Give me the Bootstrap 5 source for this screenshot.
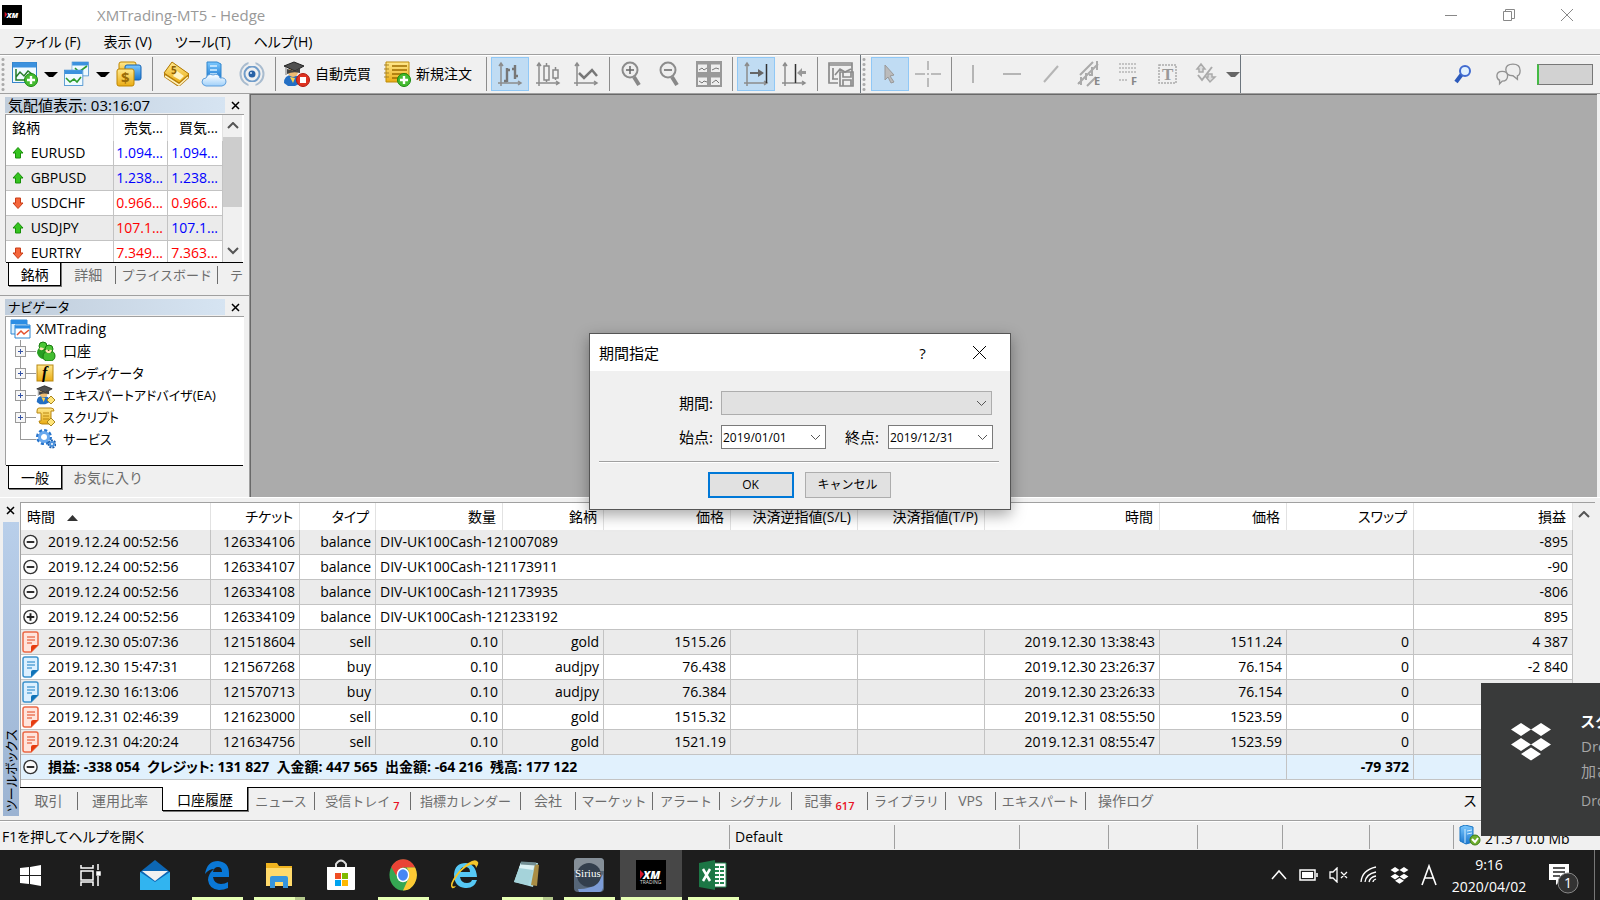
<!DOCTYPE html>
<html lang="ja">
<head>
<meta charset="utf-8">
<meta name="viewport" content="width=device-width, initial-scale=1">
<title>XMTrading-MT5 - Hedge</title>
<link href="https://cdn.jsdelivr.net/npm/bootstrap@5.3.0/dist/css/bootstrap.min.css" rel="stylesheet">
<style>
:root{--face:#f0f0f0;--edge:#a0a0a0;--grid:#c3c3c3}
body{font-family:"Open Sans","Noto Sans CJK JP",sans-serif;font-size:14px;line-height:20px;color:#000;font-feature-settings:"palt";background:var(--face);white-space:nowrap}
button{color:inherit;background:none;border:0;padding:0}
svg{display:block;flex:none}
.titlebar{height:29px;background:#fff;color:#999;font-size:15px}
.caption-btn{width:58px;height:29px}
.app-icon{width:20px;height:20px;margin:0 75px 0 2px}
.menubar{height:25px;gap:23px;padding-left:13px}
.menubar a{color:#000;text-decoration:none}
.toolstrip{height:40px;border-top:1px solid var(--edge);border-bottom:1px solid var(--edge);box-shadow:inset 0 1px #fff}
.grip{width:6px;height:34px;background:radial-gradient(circle,#aaa 1px,transparent 2px) 0 0/6px 5px}
.tool{width:38px;height:34px;display:flex;align-items:center;justify-content:center}
.wide{margin-left:-3px}
.wide .tool{width:39px}
.tool.on{background:#c0dcf3;border:1px solid #90c8f6}
.drop{width:14px;height:34px}
.drop::after{content:"";display:block;border:5px solid transparent;border-top-color:#000;border-bottom:0}
.drop.dim::after{border-top-color:#666}
.rule{width:1px;height:34px;margin:0 4px;background:#8c8c8c}
.text-tool{height:34px;gap:5px;padding:0 3px;width:101px}
.meter{width:56px;height:21px;background:#d2d2d2;border:1px solid #777;border-left:2px solid #4b4;margin-right:7px}
.work{flex:1;min-height:0}
.side{width:251px;border-right:1px solid #696969;box-shadow:inset -1px 0 var(--edge)}
.canvas-area{background:#ababab;border-top:1px solid #696969;margin-right:3px}
.pane-title{height:16px;margin:3px 0 0 5px;padding-right:7px;line-height:16px}
.pane-title span{background:linear-gradient(90deg,#c0cddb,#d6e4f2);width:220px;padding-left:3px;flex:none;font-size:15px}
.kana,.pane-title .kana{font-size:13px}
.close-x{width:16px;height:16px;display:flex;align-items:center;justify-content:center}
.sunken{margin:1px 6px 0 5px;border-left:1px solid var(--edge);border-top:1px solid var(--edge);background:#fff}
.quotes{height:148px;overflow:hidden}
.quotes table{width:217px;table-layout:fixed;border-collapse:separate;border-spacing:0}
.quotes td,.quotes th{height:25px;padding:0 4px;border-right:1px solid var(--grid);border-bottom:1px solid var(--grid);font-weight:400;overflow:hidden}
.quotes th{height:26px;border-bottom:0;border-color:#e2e2e2;padding:0 6px}
.quotes .num{text-align:right;padding:0 4px 0 0}
.quotes tbody tr:nth-child(even){background:#ebebeb}
.up{color:#00f}.down{color:#f00}
.sym{width:17px;display:inline-block;padding-left:2px}
.sym svg{display:inline-block;vertical-align:-1px}
.scroller{width:19px;flex:none;background:var(--face);margin-right:2px}
.thumb{height:70px;background:#cdcdcd}
.scroller .arr{height:22px;display:flex;align-items:center;justify-content:center}
.tabset{border-top:1px solid #000;color:#6d6d6d;background:var(--face)}
.tabset button{height:18px;line-height:18px;border-right:1px solid #6d6d6d;text-align:center}
.tabset button.on{height:24px;margin-top:-1px;background:#fff;border:1px solid #000;border-width:0 1px 1px;color:#000;padding-top:2px;box-shadow:1px 1px #777}
.tabset button.last{border:0}
.mini-tabs{margin:0 7px 0 6px;height:27px;padding-left:2px;overflow:hidden}
.mini-tabs .on{width:54px}.mini-tabs .w-a{width:56px}.mini-tabs .w-b{width:103px}.mini-tabs .w-c{width:92px}
.pane-one{height:199px;border-bottom:1px solid var(--edge)}
.tree{height:149px;list-style:none;padding:1px 0 0 4px}
.tree li{height:22px;display:flex;align-items:center}
.tree .stem{width:26px;height:22px;background:linear-gradient(#999,#999) 10px 0/1px 22px no-repeat,linear-gradient(90deg,#999,#999) 10px 11px/16px 1px no-repeat}
.tree li:last-child .stem{background-size:1px 11px,16px 1px}
.plus{width:11px;height:11px;border:1px solid #999;background:linear-gradient(#3553a5,#3553a5) 2px 4px/5px 1px no-repeat,linear-gradient(#3553a5,#3553a5) 4px 2px/1px 5px no-repeat,#f7f7f7;margin:6px 0 0 5px;display:block}
.tree svg{margin-right:7px}
.toolbox{height:323px;border-top:1px solid #fff;background:var(--face)}
.rail{width:20px}
.rail-label{width:16px;margin-left:3px;background:linear-gradient(#9bb3d2,#b9cfea);flex:1;writing-mode:vertical-rl;text-orientation:sideways;transform:rotate(180deg);font-size:13px;line-height:16px;padding-top:4px}
.book{border:1px solid var(--edge);border-width:1px 0 0 1px;margin:4px 5px 0 0;background:#fff;height:285px}
.book-rows{flex:1;min-width:0}
.history{width:100%;table-layout:fixed;border-collapse:separate;border-spacing:0}
.history th,.history td{height:25px;padding:0 4px;text-align:right;border-right:1px solid var(--grid);border-bottom:1px solid var(--grid);font-weight:400;overflow:visible}
.history th{height:27px;border-bottom:0;border-color:#e2e2e2;padding:1px 6px 0}
.history tbody tr:nth-child(odd){background:#ebebeb}
.history .start{text-align:left}
.history td:first-child{padding-left:1px}
.history td svg{margin-right:9px;width:17px}
.history tfoot td{background:#e1f1fd;font-weight:700}
.c1{width:190px}.c2{width:89px}.c3{width:76px}.c4{width:127px}.c5{width:101px}.c9{width:175px}
.ledger-scroll{width:22px;flex:none;background:var(--face)}
.main-tabs{display:grid;grid-template-columns:58px 84px 86px 67px 96px 110px 55px 77px 67px 72px 76px 78px 50px 90px 80px auto;height:26px;margin-right:5px}
.main-tabs button{margin-top:4px}
.mini-tabs button{margin-top:3px}
.main-tabs .strategy{color:#000;text-align:right;padding-right:104px}
.count{color:#e81123;font-size:11px;font-weight:600;position:relative;top:4px;margin-left:3px}
.statusbar{height:30px;border-top:1px solid var(--edge);box-shadow:inset 0 1px #fff}
.statusbar div{height:24px;border-right:1px solid var(--edge);margin-top:4px;padding:2px 0 0 5px}
.s1{width:730px}.s2{width:165px}.s3{width:125px}.s4{width:89px}.s6{width:85px}.s7{width:87px}.s8{width:84px}
.statusbar .s1{padding-left:2px}.statusbar .s9{border:0;padding-top:0}
.taskbar{height:50px;background:#1d1d1d;color:#fff}
.task{width:62px;height:50px;display:flex;align-items:center;justify-content:center}
.task.sys{width:60px}
.task.run{background:linear-gradient(#e6ffb4,#e6ffb4) center bottom/51px 3px no-repeat}
.task.multi{background:linear-gradient(90deg,#e6ffb4 41px,#b4c98c 41px) center bottom/51px 3px no-repeat}
.task.front{background:linear-gradient(#e6ffb4,#e6ffb4) center bottom/61px 3px no-repeat,#474747}
.tray{width:30px;display:flex;justify-content:center;align-items:center}
.clock{width:90px;line-height:22px;text-align:center}
.notice{width:52px;padding-left:15px;margin-right:8px}
.peek{width:6px;border-left:1px solid #777}
.period-dialog{position:absolute;top:333px;left:50%;transform:translateX(-50%);width:422px;background:var(--face);border:1px solid #555;box-shadow:0 5px 14px rgba(0,0,0,.35);z-index:5;font-size:15px}
.dialog-head{height:37px;background:#fff;padding:0 2px 0 9px}
.dialog-head button{width:57px;height:37px;display:flex;align-items:center;justify-content:center}
.dialog-body{padding:20px 17px 11px 9px}
.dialog-body label{width:122px;text-align:right;padding-right:8px}
.dialog-body label.second{width:62px;padding-right:9px}
.picker{appearance:none;height:24px;border:1px solid #7a7a7a;border-radius:0;background:#fff url("data:image/svg+xml,%3Csvg xmlns='http://www.w3.org/2000/svg' width='11' height='7'%3E%3Cpath d='M1 1l4.500 4.500L10 1' fill='none' stroke='%23555'/%3E%3C/svg%3E") right 4px center no-repeat;font-size:12px;line-height:20px;padding:1px 1px 0;color:#000;width:105px;opacity:1}
.picker.full{width:271px;background-color:#e1e1e1;border-color:#adadad}
.dates{margin-top:10px}
.dialog-line{border-top:1px solid var(--edge);box-shadow:0 1px #fff;margin:12px -6px 10px 0;height:1px}
.dialog-actions{gap:11px;padding-left:6px}
.push{width:86px;height:26px;background:#e1e1e1;border:1px solid #adadad;font-size:12px}
.push.ok{border:2px solid #0078d7}
.toast-note{position:absolute;right:0;top:683px;width:119px;height:153px;background:#393a3a;z-index:6;overflow:hidden;color:#a6a6a6;font-size:15px}
.toast-note svg{margin:40px 30px 0 30px}
.toast-copy{padding-top:26px;line-height:25px}
.toast-copy strong{color:#fff}
.toast-copy small{font-size:14px;line-height:33px}
</style>
</head>
<body class="d-flex flex-column vh-100 overflow-hidden position-relative">
<svg width="0" height="0" class="position-absolute">
 <defs>
  <linearGradient id="gold" x2="0" y2="1"><stop stop-color="#ffe98e"/><stop offset="1" stop-color="#eaac14"/></linearGradient>
  <linearGradient id="sky" x2="0" y2="1"><stop stop-color="#7cc9ff"/><stop offset="1" stop-color="#1a76cf"/></linearGradient>
  <linearGradient id="pale" x2="0" y2="1"><stop stop-color="#fff"/><stop offset="1" stop-color="#9fd0fa"/></linearGradient>
 </defs>
 <symbol id="addball" viewBox="0 0 14 14"><circle cx="7" cy="7" r="6.500" fill="#45bb31" stroke="#188a0d"/><path d="M7 3v8M3 7h8" stroke="#fff" stroke-width="2.400"/></symbol>
 <symbol id="axes" viewBox="0 0 26 26"><path d="M4 3v22M1 22h22M2 5l2-3 2 3M21 20l3 2-3 2" fill="none" stroke="#8c8c8c" stroke-width="1.500"/></symbol>
 <symbol id="up" viewBox="0 0 12 12"><path d="M6 .5l5 5.500H8.500v5h-5V6H1z" fill="#35c420" stroke="#199009"/></symbol>
 <symbol id="down" viewBox="0 0 12 12"><path d="M6 11.500L1 6h2.500V1h5v5H11z" fill="#f5663b" stroke="#c93c17"/></symbol>
 <symbol id="minus" viewBox="0 0 18 18"><circle cx="9" cy="9" r="7" fill="#fafafa" stroke="#333" stroke-width="1.500"/><path d="M5 9h8" stroke="#222" stroke-width="2"/></symbol>
 <symbol id="plus" viewBox="0 0 18 18"><circle cx="9" cy="9" r="7" fill="#fafafa" stroke="#333" stroke-width="1.500"/><path d="M5 9h8M9 5v8" stroke="#222" stroke-width="2"/></symbol>
 <symbol id="sell" viewBox="0 0 17 22"><path d="M3 1h11q2 0 2 2v11l-7 7H3q-2 0-2-2V3q0-2 2-2z" fill="#ffe4dc" stroke="#ec6845" stroke-width="1.500"/><path d="M16 14l-7 7v-5q0-2 2-2z" fill="#e63c10"/><path d="M5 6h8M5 9h8M5 12h5" stroke="#ec7a5c" stroke-width="1.300"/></symbol>
 <symbol id="buy" viewBox="0 0 17 22"><path d="M3 1h11q2 0 2 2v11l-7 7H3q-2 0-2-2V3q0-2 2-2z" fill="#dcf0ff" stroke="#3d92cd" stroke-width="1.500"/><path d="M16 14l-7 7v-5q0-2 2-2z" fill="#0f73b8"/><path d="M5 6h8M5 9h8M5 12h5" stroke="#5aa4d8" stroke-width="1.300"/></symbol>
 <symbol id="dropbox" viewBox="0 0 40 38"><path d="M10 0l10 6.500L10 13 0 6.500zM30 0l10 6.500L30 13l-10-6.500zM10 15l10 6.500L10 28 0 21.500zM30 15l10 6.500L30 28l-10-6.500zM20 24.500l10 6.500-10 6.500L10 31z" fill="#fff"/></symbol>
 <symbol id="chart" viewBox="0 0 26 26"><rect x=".5" y="1.500" width="24" height="20" fill="#effaff" stroke="#3585ca"/><path d="M1 4h23" stroke="#3b91de" stroke-width="5"/></symbol>
 <symbol id="scholar" viewBox="0 0 26 26"><path d="M1 22q0-8 8-8 9 0 9 8l-6 3H5z" fill="#246fc4"/><circle cx="10" cy="11" r="5" fill="#eebc72"/><path d="M1 5l10-4 10 4-9 5z" fill="#505050" stroke="#222"/><path d="M4 8v5q6-3 13-1V7l-5 3z" fill="#444"/><path d="M3 6v8" stroke="#777"/><path d="M7 16l3 6 2-5" fill="#ffd34d"/></symbol>
 <symbol id="xmark" viewBox="0 0 30 30"><path d="M0 0h30v30H0z" fill="#000"/><path d="M4 10l4 4-4 5z" fill="#d6152b"/><text x="7" y="19" fill="#fff" font-family="Open Sans" font-weight="800" font-style="italic" font-size="11">XM</text></symbol>
</svg>

<header class="titlebar d-flex align-items-center">
 <svg class="app-icon"><use href="#xmark"/></svg><span>XMTrading-MT5 - Hedge</span>
 <div class="ms-auto d-flex">
  <button class="caption-btn" aria-label="最小化"><svg class="m-auto" width="12" height="12" stroke="#888"><path d="M0 6.500h12"/></svg></button>
  <button class="caption-btn" aria-label="元に戻す"><svg class="m-auto" width="14" height="14" fill="none" stroke="#888"><path d="M1.500 3.500h8v9h-8zM3.500 3V1.500h9v9H10"/></svg></button>
  <button class="caption-btn" aria-label="閉じる"><svg class="m-auto" width="14" height="14" stroke="#888"><path d="M1 1l12 12M13 1L1 13"/></svg></button>
  <span class="pe-1"></span>
 </div>
</header>
<nav class="menubar d-flex align-items-center">
 <a href="#">ファイル (F)</a><a href="#">表示 (V)</a><a href="#">ツール(T)</a><a href="#">ヘルプ(H)</a>
</nav>
<div class="toolstrip d-flex align-items-center" role="toolbar">
 <span class="grip"></span>
 <button class="tool" aria-label="新規チャート"><svg width="26" height="26"><use href="#chart"/><path d="M4 8v11h10M4 16l4-5 4 4 4-5 4 3" fill="none" stroke="#247b28" stroke-width="1.500"/><use href="#addball" x="12" y="12" width="14" height="14"/></svg></button>
 <button class="drop" aria-label="チャート一覧"></button>
 <button class="tool" aria-label="プロファイル"><svg width="26" height="26"><svg x="7" y="0" width="19" height="18" viewBox="0 0 26 26"><use href="#chart"/></svg><path d="M11 7l4 4 8-6" fill="none" stroke="#2d9c2d" stroke-width="1.600"/><svg x="0" y="8" width="20" height="20" viewBox="0 0 26 26"><use href="#chart"/></svg><path d="M2 17l4 4 4-3 3 3 4-5" fill="none" stroke="#2d9c2d" stroke-width="1.600"/></svg></button>
 <button class="drop" aria-label="プロファイル一覧"></button>
 <button class="tool" aria-label="気配値表示"><svg width="26" height="26"><rect x="3" y="1" width="17" height="14" rx="2" fill="url(#gold)" stroke="#bf8600"/><rect x="9" y="4" width="16" height="15" rx="2" fill="url(#sky)" stroke="#1562b3"/><rect x="1" y="8" width="17" height="17" rx="2" fill="url(#gold)" stroke="#bf8600"/><text x="5" y="22" font-size="15" font-weight="700" fill="#9c6c06">$</text></svg></button>
 <span class="rule"></span>
 <button class="tool" aria-label="ナビゲータ"><svg width="27" height="26"><path d="M1 12L9 1l17 12v4l-9 8h-3L1 16z" fill="#b47a0c"/><path d="M1 12L9 1l17 12-10 9z" fill="url(#gold)" stroke="#b27b07"/><path d="M2 15l14 9 9-8" fill="none" stroke="#fff3bd" stroke-width="1.500"/><path d="M14 10l7 5-4 4-7-4z" fill="#fff4c4"/><text x="8" y="13" font-size="10" font-weight="700" fill="#8c5f05">5</text></svg></button>
 <button class="tool" aria-label="VPS"><svg width="26" height="26"><path d="M6 1h10l4 2v15H6z" fill="url(#sky)" stroke="#3086ce"/><path d="M9 5h7M9 9h7M9 13h7" stroke="#d8f0ff" stroke-width="1.500"/><path d="M5 25q-4-1-4-4 0-4 4-4 2-5 7-3 6-2 7 3 6-1 6 4 0 3-4 4z" fill="url(#pale)" stroke="#5f9fdc"/></svg></button>
 <button class="tool" aria-label="シグナル"><svg width="26" height="26" fill="none"><circle cx="13" cy="13" r="11.500" stroke="#a9bccf" stroke-width="2"/><circle cx="13" cy="13" r="7.500" stroke="#719dca" stroke-width="2"/><path d="M13 0v5M13 21v5" stroke="#f0f0f0" stroke-width="7"/><circle cx="13" cy="13" r="3.500" fill="#2862a7"/><circle cx="12" cy="12" r="1" fill="#d5e9ff"/></svg></button>
 <span class="rule"></span>
 <button class="text-tool d-flex align-items-center"><svg width="27" height="26"><use href="#scholar" width="26" height="26"/><circle cx="20" cy="19" r="6.500" fill="#de3220" stroke="#af1b11"/><path d="M17 16h6v6h-6z" fill="#fff"/></svg>自動売買</button>
 <button class="text-tool d-flex align-items-center"><svg width="27" height="26"><path d="M2 1h23v20H2z" fill="url(#gold)" stroke="#bd8b0b"/><path d="M8 5h15M8 9h15M8 13h15M8 17h9" stroke="#9f6e00" stroke-width="1.500"/><path d="M0 4h5M0 8h5M0 12h5M0 16h5" stroke="#a78329"/><use href="#addball" x="13" y="12" width="14" height="14"/></svg>新規注文</button>
 <span class="rule"></span>
 <button class="tool on" aria-label="バーチャート"><svg width="26" height="26"><use href="#axes"/><path d="M10 7v14M10 9h3M7 20h3M18 4v14M15 8h3M18 15h3" stroke="#777" stroke-width="2.400"/></svg></button>
 <button class="tool" aria-label="ローソク足"><svg width="26" height="26" fill="none" stroke="#888" stroke-width="1.500"><use href="#axes"/><path d="M9 5h5v14H9zM11.500 2v3M11.500 19v2M18 9h5v8h-5zM20.500 6v3M20.500 17v2"/></svg></button>
 <button class="tool" aria-label="ラインチャート"><svg width="26" height="26"><use href="#axes"/><path d="M6 12l5 5 8-8 5 6" fill="none" stroke="#777" stroke-width="2.500"/></svg></button>
 <span class="rule"></span>
 <button class="tool" aria-label="拡大"><svg width="26" height="26"><path d="M14 16l5 8" stroke="#888" stroke-width="4"/><circle cx="10" cy="9" r="7.500" fill="#eee" stroke="#8c8c8c" stroke-width="2"/><path d="M6 9h8M10 5v8" stroke="#666" stroke-width="1.500"/></svg></button>
 <button class="tool" aria-label="縮小"><svg width="26" height="26"><path d="M14 16l5 8" stroke="#888" stroke-width="4"/><circle cx="10" cy="9" r="7.500" fill="#eee" stroke="#8c8c8c" stroke-width="2"/><path d="M6 9h8" stroke="#666" stroke-width="1.500"/></svg></button>
 <button class="tool" aria-label="整列"><svg width="26" height="26" fill="#eee" stroke="#999" stroke-width="2"><path d="M1 1h11v11H1zM14 1h11v11H14zM1 14h11v11H1zM14 14h11v11H14z"/><path d="M1 2h24M1 15h24" stroke-width="3"/><path d="M3 9l3-2 2 2 3-2M16 9l4-2 3 1M3 20l3 2 2-2 3 1M16 22l4-3 3 3" fill="none" stroke="#777" stroke-width="1"/></svg></button>
 <span class="rule"></span>
 <button class="tool on" aria-label="自動スクロール"><svg width="26" height="26"><use href="#axes"/><path d="M7 11h8V8l6 4-6 4v-3H7z" fill="#666"/><path d="M23.500 3v19" stroke="#333" stroke-width="1.500"/></svg></button>
 <button class="tool" aria-label="チャートシフト"><svg width="26" height="26"><use href="#axes"/><path d="M14.500 3v19" stroke="#333" stroke-width="1.500"/><path d="M25 10h-4V7l-5 5 5 4v-3h4z" fill="#999"/></svg></button>
 <span class="rule"></span>
 <button class="tool" aria-label="テンプレート"><svg width="26" height="26" fill="none" stroke="#8b8b8b" stroke-width="1.700"><path d="M10 22H1V2h23v9M1 4h23M5 7v11M4 18h6M7 14l5-6 5 3 6-3"/><path d="M12 11h13v14H12zM15 11v5h8v-5M15 25v-6h8v6" fill="#eee"/></svg></button>
 <span class="border-end border-secondary align-self-stretch"></span><span class="grip me-1"></span>
 <button class="tool on" aria-label="カーソル"><svg width="16" height="22"><path d="M3 2l9 10-4 1 4 6-3 1-3-6-3 3z" fill="#bbb" stroke="#999"/></svg></button>
 <button class="tool" aria-label="十字"><svg width="26" height="26" stroke="#bbb" stroke-width="2"><path d="M13 0v9M13 12v2M13 17v9M0 13h10M16 13h10"/></svg></button>
 <span class="rule"></span>
 <div class="d-flex wide">
  <button class="tool" aria-label="垂直線"><svg width="26" height="26" stroke="#b5b5b5" stroke-width="2"><path d="M13 4v18"/></svg></button>
  <button class="tool" aria-label="水平線"><svg width="26" height="26" stroke="#b5b5b5" stroke-width="2"><path d="M4 13h18"/></svg></button>
  <button class="tool" aria-label="トレンドライン"><svg width="26" height="26" stroke="#b5b5b5" stroke-width="2"><path d="M6 21L20 5"/></svg></button>
  <button class="tool" aria-label="チャネル"><svg width="28" height="28" stroke="#aaa" stroke-width="2"><path d="M2 24L22 4M4 15L17 2M11 26l9-9M5 17v8M10 13v7M16 7v9M21 1v9M2 23h3M13 15h3"/><text x="18" y="25" font-size="11" font-weight="700" fill="#888" stroke="none">E</text></svg></button>
  <button class="tool" aria-label="フィボナッチ"><svg width="26" height="28" stroke="#b5b5b5" stroke-width="1.500" stroke-dasharray="2 1"><path d="M3 4h18M3 8h18M3 12h18M3 20h9"/><text x="15" y="25" font-size="11" font-weight="700" fill="#888" stroke="none">F</text></svg></button>
  <button class="tool" aria-label="テキスト"><svg width="24" height="26"><path d="M3 4h17v18H3z" fill="none" stroke="#aaa" stroke-width="1.500" stroke-dasharray="2 1"/><text x="6" y="19" font-family="Liberation Serif" font-size="17" font-weight="700" fill="#999">T</text></svg></button>
  <button class="tool" aria-label="図形"><svg width="24" height="26" fill="#ddd" stroke="#aaa" stroke-width="1.500"><path d="M2 8l4-5 4 5H8v3H4V8zM13 16v-3h4v3h3l-5 5-4-5z"/><path d="M3 14l4 5L17 6" fill="none" stroke-width="2"/></svg></button>
 </div>
 <button class="drop dim" aria-label="図形一覧"></button><span class="border-end border-secondary align-self-stretch"></span>
 <div class="ms-auto d-flex align-items-center">
  <button class="me-4" aria-label="検索"><svg width="18" height="20"><path d="M8 10l-6 8" stroke="#2c5abb" stroke-width="4"/><circle cx="11" cy="7" r="5" fill="#e1f2ff" stroke="#416bd0" stroke-width="2"/></svg></button>
  <button class="me-3" aria-label="チャット"><svg width="25" height="24" viewBox="0 0 28 26" fill="#eee" stroke="#929292" stroke-width="1.500"><path d="M19 2q8 0 8 7 0 5-3 6v4l-5-4q-8 0-8-7 0-6 8-6z"/><path d="M7 10q6 0 6 5 0 6-6 6l-3 3v-4q-3-1-3-5 0-5 6-5z"/></svg></button>
  <div class="meter"></div>
 </div>
</div>

<main class="work d-flex">
 <aside class="side flex-shrink-0">
  <section class="pane-one">
   <div class="pane-title d-flex justify-content-between"><span>気配値表示: 03:16:07</span><button class="close-x" aria-label="閉じる"><svg width="9" height="9" stroke="#000" stroke-width="1.500"><path d="M1 1l7 7M8 1L1 8"/></svg></button></div>
   <div class="sunken quotes d-flex justify-content-between">
    <table><colgroup><col style="width:108px"><col style="width:54px"><col></colgroup>
     <thead><tr><th>銘柄</th><th class="num">売気...</th><th class="num">買気...</th></tr></thead>
     <tbody>
     <tr><td><span class="sym"><svg width="12" height="12"><use href="#up"/></svg></span> EURUSD</td><td class="num up">1.094...</td><td class="num up">1.094...</td></tr>
     <tr><td><span class="sym"><svg width="12" height="12"><use href="#up"/></svg></span> GBPUSD</td><td class="num up">1.238...</td><td class="num up">1.238...</td></tr>
     <tr><td><span class="sym"><svg width="12" height="12"><use href="#down"/></svg></span> USDCHF</td><td class="num down">0.966...</td><td class="num down">0.966...</td></tr>
     <tr><td><span class="sym"><svg width="12" height="12"><use href="#up"/></svg></span> USDJPY</td><td class="num down">107.1...</td><td class="num up">107.1...</td></tr>
     <tr><td><span class="sym"><svg width="12" height="12"><use href="#down"/></svg></span> EURTRY</td><td class="num down">7.349...</td><td class="num down">7.363...</td></tr>
     </tbody></table>
    <div class="scroller d-flex flex-column"><span class="arr"><svg width="12" height="8" fill="none" stroke="#555" stroke-width="2"><path d="M1 6l5-5 5 5"/></svg></span><span class="thumb"></span><span class="arr mt-auto"><svg width="12" height="8" fill="none" stroke="#555" stroke-width="2"><path d="M1 1l5 5 5-5"/></svg></span></div>
   </div>
   <div class="tabset mini-tabs d-flex"><button class="on">銘柄</button><button class="w-a">詳細</button><button class="w-b kana">プライスボード</button><button class="last kana ps-2 ms-1">テ</button></div>
  </section>
  <section>
   <div class="pane-title d-flex justify-content-between"><span class="kana">ナビゲータ</span><button class="close-x" aria-label="閉じる"><svg width="9" height="9" stroke="#000" stroke-width="1.500"><path d="M1 1l7 7M8 1L1 8"/></svg></button></div>
   <ul class="sunken tree mb-0">
    <li><svg class="me-1" width="22" height="20"><path d="M1 1h16v14H1z" fill="#d8efff" stroke="#3087d1"/><path d="M1 3h16" stroke="#2c8ee4" stroke-width="4"/><path d="M5 6h15v13H5z" fill="#fff" stroke="#3087d1"/><path d="M5 8h15" stroke="#2c8ee4" stroke-width="3"/><path d="M7 16l4-4 3 3 5-4" fill="none" stroke="#e5512e" stroke-width="1.500"/></svg>XMTrading</li>
    <li><span class="stem"><i class="plus"></i></span><svg width="20" height="20"><path d="M1 12q0-6 6-6t6 6-5 6-7-6z" fill="#279e21"/><circle cx="7" cy="5" r="4" fill="#4cc636" stroke="#187b0e"/><path d="M7 16q0-6 6-6t6 5-6 5-6-4z" fill="#43bd31" stroke="#187b0e"/><circle cx="13" cy="8" r="4" fill="#4cc636" stroke="#187b0e"/><path d="M10 9q3 4 5 0M4 7q2 2 3 0" stroke="#ffe6b5" stroke-width="2.500"/></svg>口座</li>
    <li class="kana"><span class="stem"><i class="plus"></i></span><svg width="20" height="20"><rect x="1" y="2" width="16" height="16" fill="url(#gold)" stroke="#b88812"/><text x="6" y="15" font-family="Liberation Serif" font-size="16" font-style="italic" font-weight="700">f</text></svg>インディケータ</li>
    <li class="kana"><span class="stem"><i class="plus"></i></span><svg width="20" height="20"><use href="#scholar" width="20" height="20"/><path d="M15 11l4 4-4 4-4-4z" fill="#ffe57a" stroke="#a98620"/></svg>エキスパートアドバイザ(EA)</li>
    <li class="kana"><span class="stem"><i class="plus"></i></span><svg width="20" height="20"><path d="M3 1h12q3 0 3 3h-3v13H6q-3 0-3-3h2V6H1V4q0-3 2-3z" fill="url(#gold)" stroke="#b88713"/><path d="M7 6h6M7 9h6M7 12h6" stroke="#b88713"/><path d="M15 11l4 4-4 4-4-4z" fill="#ffe57a" stroke="#a98620"/></svg>スクリプト</li>
    <li class="kana"><span class="stem"></span><svg width="20" height="20" fill="none"><circle cx="8" cy="8" r="6.500" stroke="#2a76cc" stroke-width="3" stroke-dasharray="3 2"/><circle cx="8" cy="8" r="4.500" stroke="#68a8ee" stroke-width="3"/><circle cx="16" cy="15" r="3.500" stroke="#1b5eac" stroke-width="2" stroke-dasharray="2 1"/><circle cx="16" cy="15" r="2" stroke="#4b91dc" stroke-width="2"/></svg>サービス</li>
   </ul>
   <div class="tabset mini-tabs d-flex"><button class="on">一般</button><button class="last w-c">お気に入り</button></div>
  </section>
 </aside>
 <div class="canvas-area flex-grow-1"></div>
</main>

<section class="toolbox d-flex flex-shrink-0">
 <div class="rail d-flex flex-column flex-shrink-0 pb-1">
  <button class="close-x mt-1 mb-1" aria-label="閉じる"><svg class="ms-1" width="9" height="9" stroke="#000" stroke-width="1.500"><path d="M1 1l7 7M8 1L1 8"/></svg></button>
  <div class="rail-label">ツールボックス</div>
 </div>
 <div class="flex-grow-1">
  <div class="book d-flex">
   <div class="book-rows">
   <table class="history">
    <colgroup><col class="c1"><col class="c2"><col class="c3"><col class="c4"><col class="c5"><col class="c4"><col class="c4"><col class="c4"><col class="c9"><col class="c4"><col class="c4"><col></colgroup>
    <thead><tr><th class="start">時間 <svg class="d-inline-block ms-2" width="12" height="8"><path d="M0 7l5.500-6L11 7z" fill="#333"/></svg></th><th>チケット</th><th>タイプ</th><th>数量</th><th>銘柄</th><th>価格</th><th>決済逆指値(S/L)</th><th>決済指値(T/P)</th><th>時間</th><th>価格</th><th>スワップ</th><th>損益</th></tr></thead>
    <tbody>
     <tr><td><div class="d-flex align-items-center"><svg width="18" height="18"><use href="#minus"/></svg>2019.12.24 00:52:56</div></td><td>126334106</td><td>balance</td><td colspan="8" class="start">DIV-UK100Cash-121007089</td><td>-895</td></tr>
     <tr><td><div class="d-flex align-items-center"><svg width="18" height="18"><use href="#minus"/></svg>2019.12.24 00:52:56</div></td><td>126334107</td><td>balance</td><td colspan="8" class="start">DIV-UK100Cash-121173911</td><td>-90</td></tr>
     <tr><td><div class="d-flex align-items-center"><svg width="18" height="18"><use href="#minus"/></svg>2019.12.24 00:52:56</div></td><td>126334108</td><td>balance</td><td colspan="8" class="start">DIV-UK100Cash-121173935</td><td>-806</td></tr>
     <tr><td><div class="d-flex align-items-center"><svg width="18" height="18"><use href="#plus"/></svg>2019.12.24 00:52:56</div></td><td>126334109</td><td>balance</td><td colspan="8" class="start">DIV-UK100Cash-121233192</td><td>895</td></tr>
     <tr><td><div class="d-flex align-items-center"><svg width="17" height="22"><use href="#sell"/></svg>2019.12.30 05:07:36</div></td><td>121518604</td><td>sell</td><td>0.10</td><td>gold</td><td>1515.26</td><td></td><td></td><td>2019.12.30 13:38:43</td><td>1511.24</td><td>0</td><td>4 387</td></tr>
     <tr><td><div class="d-flex align-items-center"><svg width="17" height="22"><use href="#buy"/></svg>2019.12.30 15:47:31</div></td><td>121567268</td><td>buy</td><td>0.10</td><td>audjpy</td><td>76.438</td><td></td><td></td><td>2019.12.30 23:26:37</td><td>76.154</td><td>0</td><td>-2 840</td></tr>
     <tr><td><div class="d-flex align-items-center"><svg width="17" height="22"><use href="#buy"/></svg>2019.12.30 16:13:06</div></td><td>121570713</td><td>buy</td><td>0.10</td><td>audjpy</td><td>76.384</td><td></td><td></td><td>2019.12.30 23:26:33</td><td>76.154</td><td>0</td><td></td></tr>
     <tr><td><div class="d-flex align-items-center"><svg width="17" height="22"><use href="#sell"/></svg>2019.12.31 02:46:39</div></td><td>121623000</td><td>sell</td><td>0.10</td><td>gold</td><td>1515.32</td><td></td><td></td><td>2019.12.31 08:55:50</td><td>1523.59</td><td>0</td><td></td></tr>
     <tr><td><div class="d-flex align-items-center"><svg width="17" height="22"><use href="#sell"/></svg>2019.12.31 04:20:24</div></td><td>121634756</td><td>sell</td><td>0.10</td><td>gold</td><td>1521.19</td><td></td><td></td><td>2019.12.31 08:55:47</td><td>1523.59</td><td>0</td><td></td></tr>
    </tbody>
    <tfoot><tr><td colspan="10" class="start"><div class="d-flex align-items-center"><svg width="18" height="18"><use href="#minus"/></svg><span>損益: -338 054 &nbsp;クレジット: 131 827 &nbsp;入金額: 447 565 &nbsp;出金額: -64 216 &nbsp;残高: 177 122</span></div></td><td>-79 372</td><td></td></tr></tfoot>
   </table>
   </div>
   <div class="ledger-scroll"><svg class="mx-auto mt-2" width="12" height="8" fill="none" stroke="#555" stroke-width="2"><path d="M1 6l5-5 5 5"/></svg></div>
  </div>
  <div class="tabset main-tabs">
   <button>取引</button><button class="last">運用比率</button><button class="on">口座履歴</button><button class="kana">ニュース</button><button class="kana">受信トレイ<span class="count">7</span></button><button class="kana">指標カレンダー</button><button>会社</button><button class="kana">マーケット</button><button class="kana">アラート</button><button class="kana">シグナル</button><button>記事<span class="count">617</span></button><button class="kana">ライブラリ</button><button>VPS</button><button class="kana">エキスパート</button><button class="last">操作ログ</button><button class="last strategy">スト</button>
  </div>
 </div>
</section>

<footer class="statusbar d-flex flex-shrink-0">
 <div class="s1">F1を押してヘルプを開く</div><div class="s2">Default</div><div class="s3"></div><div class="s4"></div><div class="s4"></div><div class="s6"></div><div class="s7"></div><div class="s8"></div>
 <div class="s9 d-flex"><svg width="22" height="22"><path d="M1 2l5-2 8 2v15l-7 2-6-3z" fill="url(#sky)" stroke="#1674c4"/><path d="M6 4v14M8 6l5-1M8 9l5-1" stroke="#d1edff"/><circle cx="16" cy="15" r="5" fill="#6fae2d" stroke="#3c7d17"/><path d="M13 14l3 3 3-4" fill="none" stroke="#fff" stroke-width="2"/></svg><span class="ps-1 pt-1">21.3 / 0.0 Mb</span></div>
</footer>

<nav class="taskbar d-flex flex-shrink-0">
 <button class="task sys" aria-label="スタート"><svg width="21" height="21" fill="#fff"><path d="M0 3l9-1v8H0zM10 2l11-2v10H10zM0 11h9v8l-9-1zM10 11h11v10l-11-2z"/></svg></button>
 <button class="task sys" aria-label="タスクビュー"><svg width="22" height="22" fill="none" stroke="#fff" stroke-width="1.500"><path d="M2 1v3h12V1M2 7h12v9H2zM2 22v-4h12v4M19 0v6M19 12v10"/><path d="M18 8h3v3h-3z" fill="#fff"/></svg></button>
 <button class="task ms-1" aria-label="メール"><svg width="30" height="32"><path d="M0 13L15 1l15 12v18H0z" fill="#0d67b4"/><path d="M0 13l15 10 15-10v18H0z" fill="#31b4f0"/><path d="M2 12l13 10 13-10z" fill="#f1f1f1"/></svg></button>
 <button class="task run" aria-label="Edge"><svg width="26" height="30"><path d="M1 14Q3 1 14 1q11 1 11 12v4H9q1 7 8 7 4 0 7-2v6q-4 2-9 2-10-1-11-10 0-6 6-11-5 0-9 5zM9 12h9q0-5-4-5t-5 5z" fill="#0a78d6"/></svg></button>
 <button class="task multi" aria-label="エクスプローラー"><svg width="28" height="28"><path d="M1 2h11l2 3h13v20H1z" fill="#f0b41f"/><path d="M1 7h26v18H1z" fill="#ffda6b"/><path d="M5 27V17q0-2 2-2h14q2 0 2 2v10h-5v-6h-8v6z" fill="#3595dc"/></svg></button>
 <button class="task" aria-label="ストア"><svg width="30" height="32"><path d="M10 9V5q5-7 10 0v4" fill="none" stroke="#ddd" stroke-width="2"/><path d="M1 8h28v22q0 1-1 1H2q-1 0-1-1z" fill="#fff"/><path d="M9 14h6v6H9z" fill="#f04e23"/><path d="M16 14h6v6h-6z" fill="#7fbb00"/><path d="M9 21h6v6H9z" fill="#00a3ef"/><path d="M16 21h6v6h-6z" fill="#ffb900"/></svg></button>
 <button class="task run" aria-label="Chrome"><svg width="28" height="32" viewBox="0 0 30 30" preserveAspectRatio="none"><circle cx="15" cy="15" r="14.500" fill="#35a853"/><path d="M2.500 7.500A14.500 14.500 0 0 1 28 8H15q-6 1-7 8z" fill="#e94335"/><path d="M28 8a14.500 14.500 0 0 1-13 21.500L21 18q2-5-2-10z" fill="#fcc934"/><circle cx="15" cy="15" r="6.800" fill="#fff"/><circle cx="15" cy="15" r="5.300" fill="#4687f4"/></svg></button>
 <button class="task" aria-label="Internet Explorer"><svg width="30" height="32"><path d="M4 15Q5 4 16 4q10 1 11 14H10q1 6 7 6 4 0 5-3h5q-3 9-12 8-11-1-11-14zm6-2h10q0-5-5-5t-5 5z" fill="#56c8f5"/><path d="M2 29Q-2 25 9 12 24-3 28 3q1 2-2 6 0-5-6-3Q12 9 4 22q-4 7 2 5-2 3-4 2z" fill="#f5c629"/></svg></button>
 <button class="task multi" aria-label="メモ帳"><svg width="30" height="30"><path d="M9 2l17 1-5 24-19-5z" fill="#a9dae2"/><path d="M9 3l14 1-7 21-14-3z" fill="#a5d3da"/><path d="M9 3l14 1-2 6-14-2z" fill="#ddf2f4"/><path d="M23 4l4 1-2 21-6-1z" fill="#a98d44"/><path d="M9 3l15 1" stroke="#738f94" stroke-width="3"/></svg></button>
 <button class="task run" aria-label="Sirius"><svg width="30" height="34"><rect width="30" height="34" rx="4" fill="#566678"/><path d="M0 4q0-4 4-4h22q4 0 4 4v9H0z" fill="#858f98"/><path d="M4 31q18 1 25-15v14q-1 4-4 4H5z" fill="#7c9cd7"/><circle cx="15" cy="17" r="12" fill="#333f4d"/><text x="1" y="19" font-family="Liberation Serif" font-size="11" fill="#fff">Sirius</text></svg></button>
 <button class="task front" aria-label="XMTrading"><svg width="30" height="30"><use href="#xmark"/><text x="4" y="24" font-size="5" fill="#ddd">TRADING</text></svg></button>
 <button class="task run" aria-label="Excel"><svg width="28" height="30"><path d="M12 3h15v24H12z" fill="#fff" stroke="#238650"/><path d="M16 7h9M16 11h9M16 15h9M16 19h9M16 23h9" stroke="#238650" stroke-width="2" stroke-dasharray="4 1"/><path d="M0 3l16-3v30L0 27z" fill="#1c7645"/><path d="M4 9l7 12M11 9L4 21" stroke="#fff" stroke-width="2.500"/></svg></button>
 <div class="ms-auto d-flex">
  <button class="tray" aria-label="隠れているインジケーター"><svg width="18" height="12" fill="none" stroke="#fff" stroke-width="1.500"><path d="M2 10l7-8 7 8"/></svg></button>
  <button class="tray" aria-label="電池"><svg width="20" height="12"><path d="M1 1h15v10H1zM18 4v4" fill="none" stroke="#fff" stroke-width="1.500"/><path d="M3 3h11v6H3z" fill="#fff"/></svg></button>
  <button class="tray" aria-label="音量"><svg width="20" height="16" fill="none" stroke="#fff" stroke-width="1.300"><path d="M1 5h3l4-4v14l-4-4H1zM12 5l6 6M18 5l-6 6"/></svg></button>
  <button class="tray" aria-label="Wi-Fi"><svg width="18" height="18" fill="none" stroke="#fff" stroke-width="1.300"><path d="M1 16Q2 4 16 1M5 16Q6 8 16 6M9 16q1-5 7-6M13 16q0-2 3-3"/></svg></button>
  <button class="tray" aria-label="Dropbox"><svg width="19" height="17"><use href="#dropbox"/></svg></button>
  <button class="tray" aria-label="入力モード A"><svg width="16" height="22" fill="none" stroke="#fff" stroke-width="1.600"><path d="M1 21L8 2l7 19M4 14h8"/></svg></button>
  <div class="clock pt-1">9:16<br>2020/04/02</div>
  <button class="notice" aria-label="通知"><svg width="32" height="38"><path d="M0 8h20v16h-8l-5 5v-5H0z" fill="#fff"/><path d="M4 12h12M4 16h12M4 20h7" stroke="#222" stroke-width="1.500"/><circle cx="19" cy="27" r="10" fill="#333" stroke="#888"/><text x="15" y="32" font-size="14" fill="#fff">1</text></svg></button>
  <span class="peek"></span>
 </div>
</nav>

<section class="period-dialog" role="dialog" aria-label="期間指定">
 <div class="dialog-head d-flex align-items-center"><span class="me-auto">期間指定</span><button aria-label="ヘルプ">?</button><button aria-label="閉じる"><svg width="13" height="13" stroke="#000"><path d="M0 0l13 13M13 0L0 13"/></svg></button></div>
 <form class="dialog-body">
  <div class="d-flex align-items-center"><label for="span">期間:</label><select id="span" class="picker full" disabled><option></option></select></div>
  <div class="dates d-flex align-items-center"><label for="from">始点:</label><select id="from" class="picker"><option>2019/01/01</option></select><label class="second" for="to">終点:</label><select id="to" class="picker"><option>2019/12/31</option></select></div>
  <div class="dialog-line"></div>
  <div class="dialog-actions d-flex justify-content-center"><button type="button" class="push ok">OK</button><button type="button" class="push">キャンセル</button></div>
 </form>
</section>
<aside class="toast-note d-flex"><svg width="40" height="38"><use href="#dropbox"/></svg><div class="toast-copy"><strong>スクリーン</strong><br>Dropbox<br>加されました<br><small>Dropbox</small></div></aside>
<script src="https://cdn.jsdelivr.net/npm/bootstrap@5.3.0/dist/js/bootstrap.bundle.min.js"></script>
</body>
</html>
